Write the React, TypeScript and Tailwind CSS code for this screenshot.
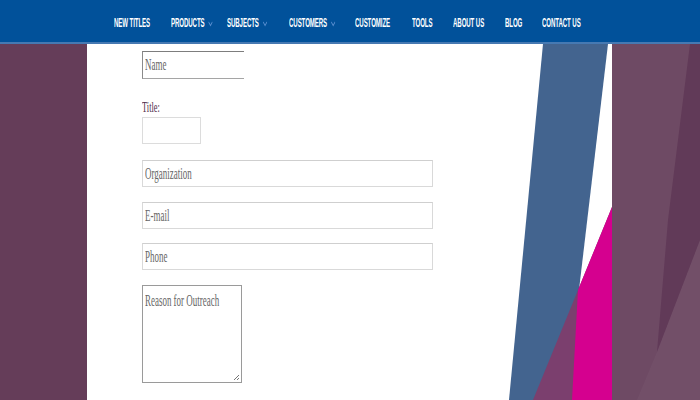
import React from "react";

const navItems: { label: string; w: string; chev?: boolean }[] = [
  { label: "NEW TITLES", w: "w-[57px]" },
  { label: "PRODUCTS", w: "w-[56px]", chev: true },
  { label: "SUBJECTS", w: "w-[62px]", chev: true },
  { label: "CUSTOMERS", w: "w-[66px]", chev: true },
  { label: "CUSTOMIZE", w: "w-[57px]" },
  { label: "TOOLS", w: "w-[41px]" },
  { label: "ABOUT US", w: "w-[52px]" },
  { label: "BLOG", w: "w-[37px]" },
  { label: "CONTACT US", w: "w-[50px]" },
];

function Chevron() {
  return (
    <svg width="10" height="6" viewBox="0 0 10 6" className="ml-[8px] mt-[3px]">
      <path d="M1 1 L5 4.5 L9 1" fill="none" stroke="#5b8fd0" strokeWidth="1.4" />
    </svg>
  );
}

function Field({ w, h, text, extra }: { w: string; h: string; text?: string; extra?: string }) {
  return (
    <div className={`${w} ${h} ${extra ?? ""} flex items-center pl-[2px] bg-white overflow-hidden`}>
      {text && (
        <span className="inline-block origin-left scale-x-[0.56] whitespace-nowrap text-[16px] leading-[18px] text-[#666666]">
          {text}
        </span>
      )}
    </div>
  );
}

export default function App() {
  return (
    <div
      className="w-[700px] h-[400px] overflow-hidden flex flex-col bg-white"
      style={{ fontFamily: '"Liberation Serif", serif' }}
    >
      <nav
        className="h-[44px] shrink-0 bg-[#01519a] border-b-2 border-[#4679b2] flex items-center pl-[114px] pt-[1px]"
        style={{ fontFamily: '"Liberation Sans", Arial, sans-serif' }}
      >
        {navItems.map((it) => (
          <div key={it.label} className={`${it.w} shrink-0 whitespace-nowrap`}>
            <span className="inline-flex items-center origin-left scale-x-[0.47] text-[13px] font-bold text-white leading-[15px] tracking-[-0.2px]">
              {it.label}
              {it.chev && <Chevron />}
            </span>
          </div>
        ))}
      </nav>
      <div className="flex flex-1 min-h-0">
        <div className="w-[87px] shrink-0 bg-[#653d59]" />
        <main className="relative w-[525px] shrink-0 bg-white">
          <svg
            className="absolute inset-0"
            width="525"
            height="356"
            viewBox="0 0 525 356"
          >
            <polygon points="456,0 521,0 479,356 422,356" fill="#43648f" />
            <polygon points="525,163 525,356 446,356" fill="#7b3f6e" />
            <polygon points="525,163 525,356 485,356 491,246" fill="#d5008f" />
          </svg>
          <form className="relative flex flex-col pl-[55px] pt-[7px]">
            <Field
              w="w-[102px]"
              h="h-[28px]"
              text="Name"
              extra="border border-r-0 border-[#a5a5a5] border-t-[#7d7d7d] border-l-[#8a8a8a]"
            />
            <div className="mt-[20px] h-[16px] text-[15px] leading-[16px] text-[#4f2c4a]">
              <span className="inline-block origin-left scale-x-[0.56] whitespace-nowrap">Title:</span>
            </div>
            <Field w="w-[59px]" h="h-[27px]" extra="mt-[2px] border border-[#dcdcdc]" />
            <Field
              w="w-[291px]"
              h="h-[27px]"
              text="Organization"
              extra="mt-[16px] border border-[#d9d9d9] border-t-[#cfcfcf]"
            />
            <Field
              w="w-[291px]"
              h="h-[27px]"
              text="E-mail"
              extra="mt-[15px] border border-[#d9d9d9] border-t-[#cfcfcf]"
            />
            <Field
              w="w-[291px]"
              h="h-[27px]"
              text="Phone"
              extra="mt-[14px] border border-[#d9d9d9] border-t-[#cfcfcf]"
            />
            <div className="relative mt-[15px] w-[100px] h-[98px] border border-[#9a9a9a] pl-[2px] pt-[3px]">
              <span className="inline-block origin-left scale-x-[0.56] whitespace-nowrap text-[16px] leading-[18px] text-[#666666]">
                Reason for Outreach
              </span>
              <svg className="absolute right-[1px] bottom-[1px]" width="7" height="7" viewBox="0 0 7 7">
                <path d="M6 1 L1 6 M6 4 L4 6" stroke="#777" strokeWidth="1" />
              </svg>
            </div>
          </form>
        </main>
        <aside className="relative flex-1 bg-[#6e4a64]">
          <svg className="absolute inset-0" width="88" height="356" viewBox="0 0 88 356">
            <polygon points="78,0 88,0 88,196 45,308 56,176" fill="#613a58" />
            <polygon points="45,308 88,196 88,356 25,356" fill="#ffffff" fillOpacity="0.03" />
          </svg>
        </aside>
      </div>
    </div>
  );
}
